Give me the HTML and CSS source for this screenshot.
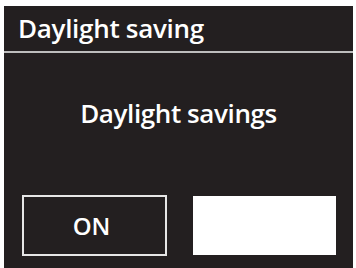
FILE: index.html
```html
<!DOCTYPE html>
<html>
<head>
<meta charset="utf-8">
<link rel="stylesheet" href="styles.css">
</head>
<body>
<div class="screen">
  <div class="header">Daylight saving</div>
  <div class="sep"></div>
  <div class="content">
    <div class="message">Daylight savings</div>
    <div class="buttons">
      <div class="btn btn-on">ON</div>
      <div class="btn btn-off"></div>
    </div>
  </div>
</div>
</body>
</html>
```
FILE: styles.css
```css
html, body {
  margin: 0;
  padding: 0;
  background: #ffffff;
}
body {
  width: 356px;
  height: 268px;
  overflow: hidden;
  font-family: "Open Sans", "Noto Sans", sans-serif;
}
.screen {
  margin: 6px 0 0 4px;
  width: 349px;
  height: 262px;
  background: #231f20;
  display: flex;
  flex-direction: column;
  color: #ffffff;
}
.header {
  height: 45px;
  box-sizing: border-box;
  padding-left: 14px;
  font-size: 26px;
  font-weight: 600;
  line-height: 45px;
  letter-spacing: -0.3px;
}
.sep {
  height: 2px;
  background: #bdbdbd;
}
.content {
  flex: 1;
  display: flex;
  flex-direction: column;
}
.message {
  margin-top: 44px;
  text-align: center;
  font-size: 26px;
  font-weight: 600;
  line-height: 32px;
  letter-spacing: -0.4px;
}
.buttons {
  margin-top: 66px;
  display: flex;
  padding-left: 18px;
  gap: 26px;
}
.btn {
  box-sizing: border-box;
  height: 61px;
}
.btn-on {
  width: 145px;
  border: 2px solid #e6e6e6;
  display: flex;
  align-items: center;
  justify-content: center;
  padding-right: 6px;
  font-size: 24px;
  font-weight: 600;
}
.btn-off {
  width: 143px;
  margin-top: 1px;
  height: 59px;
  background: #ffffff;
}
```
